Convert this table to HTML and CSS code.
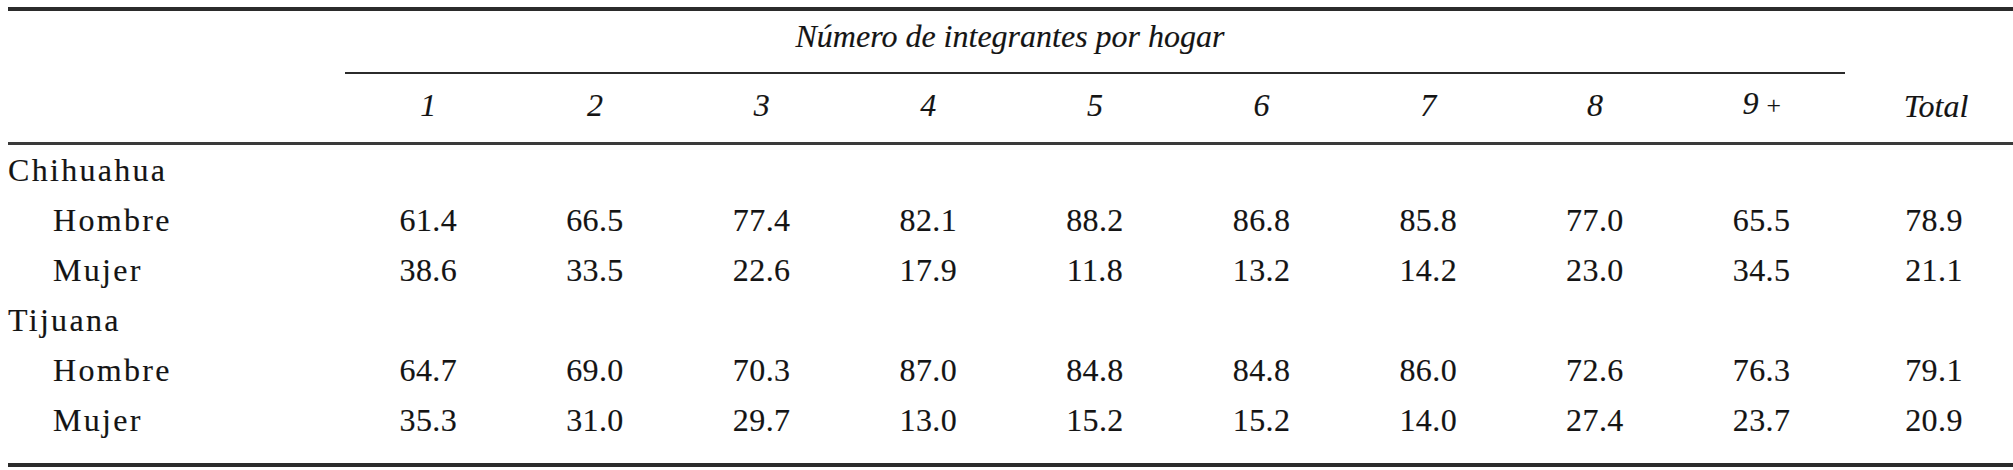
FILE: index.html
```html
<!DOCTYPE html>
<html lang="es">
<head>
<meta charset="utf-8">
<title>Número de integrantes por hogar</title>
<link rel="stylesheet" href="styles.css">
</head>
<body>
<table class="tabla">
  <colgroup>
    <col class="c-label">
    <col class="c-num"><col class="c-num"><col class="c-num">
    <col class="c-num"><col class="c-num"><col class="c-num">
    <col class="c-num"><col class="c-num"><col class="c-num">
    <col class="c-total">
  </colgroup>
  <thead>
    <tr class="h1">
      <th class="blank" rowspan="2"></th>
      <th class="cluster" colspan="9">Número de integrantes por hogar</th>
      <th class="total" rowspan="2">Total</th>
    </tr>
    <tr class="h2">
      <th>1</th><th>2</th><th>3</th><th>4</th><th>5</th>
      <th>6</th><th>7</th><th>8</th><th>9 <span class="plus">+</span></th>
    </tr>
  </thead>
  <tbody>
    <tr class="group"><td class="region">Chihuahua</td><td></td><td></td><td></td><td></td><td></td><td></td><td></td><td></td><td></td><td class="tcol"></td></tr>
    <tr><td class="sub">Hombre</td><td>61.4</td><td>66.5</td><td>77.4</td><td>82.1</td><td>88.2</td><td>86.8</td><td>85.8</td><td>77.0</td><td>65.5</td><td class="tcol">78.9</td></tr>
    <tr><td class="sub">Mujer</td><td>38.6</td><td>33.5</td><td>22.6</td><td>17.9</td><td>11.8</td><td>13.2</td><td>14.2</td><td>23.0</td><td>34.5</td><td class="tcol">21.1</td></tr>
    <tr class="group"><td class="region">Tijuana</td><td></td><td></td><td></td><td></td><td></td><td></td><td></td><td></td><td></td><td class="tcol"></td></tr>
    <tr><td class="sub">Hombre</td><td>64.7</td><td>69.0</td><td>70.3</td><td>87.0</td><td>84.8</td><td>84.8</td><td>86.0</td><td>72.6</td><td>76.3</td><td class="tcol">79.1</td></tr>
    <tr class="last"><td class="sub">Mujer</td><td>35.3</td><td>31.0</td><td>29.7</td><td>13.0</td><td>15.2</td><td>15.2</td><td>14.0</td><td>27.4</td><td>23.7</td><td class="tcol">20.9</td></tr>
  </tbody>
</table>
</body>
</html>
```

FILE: styles.css
```css
html, body {
  margin: 0;
  padding: 0;
  background: #ffffff;
  overflow: hidden;
}

body {
  font-family: "Liberation Serif", "Times New Roman", serif;
  color: #141414;
}

.tabla {
  margin: 7px 0 0 8px;
  width: 2005px;
  table-layout: fixed;
  border-collapse: separate;
  border-spacing: 0;
  border-top: 4px solid #2b2b2b;
  border-bottom: 4px solid #2b2b2b;
  font-size: 32px;
  -webkit-text-stroke: 0.15px #141414;
}

.c-label { width: 337px; }
.c-num { width: 166.67px; }
.c-total { width: 168px; }

.tabla th,
.tabla td {
  padding: 0;
  line-height: 50px;
  text-align: center;
  font-weight: normal;
  white-space: nowrap;
}

.tabla th {
  font-style: italic;
}

.h1 .cluster {
  padding: 0 170px 11px 0;
  border-bottom: 2px solid #2b2b2b;
  vertical-align: top;
}

.h1 .blank {
  border-bottom: 3px solid #3a3a3a;
}

.h1 .total {
  padding: 0 0 11px 14px;
  vertical-align: bottom;
  border-bottom: 3px solid #3a3a3a;
}

.h2 th {
  padding: 4px 0 11px 0;
  border-bottom: 3px solid #3a3a3a;
}

.plus {
  font-style: normal;
  font-size: 0.8em;
}

.tabla td {
  height: 50px;
  letter-spacing: 0.4px;
}

.tabla td.region {
  text-align: left;
  letter-spacing: 2.3px;
}

.tabla td.sub {
  text-align: left;
  padding-left: 45px;
  letter-spacing: 2.3px;
}

.tabla td.tcol {
  padding-left: 10px;
}

.last td {
  padding-bottom: 18px;
}
```
